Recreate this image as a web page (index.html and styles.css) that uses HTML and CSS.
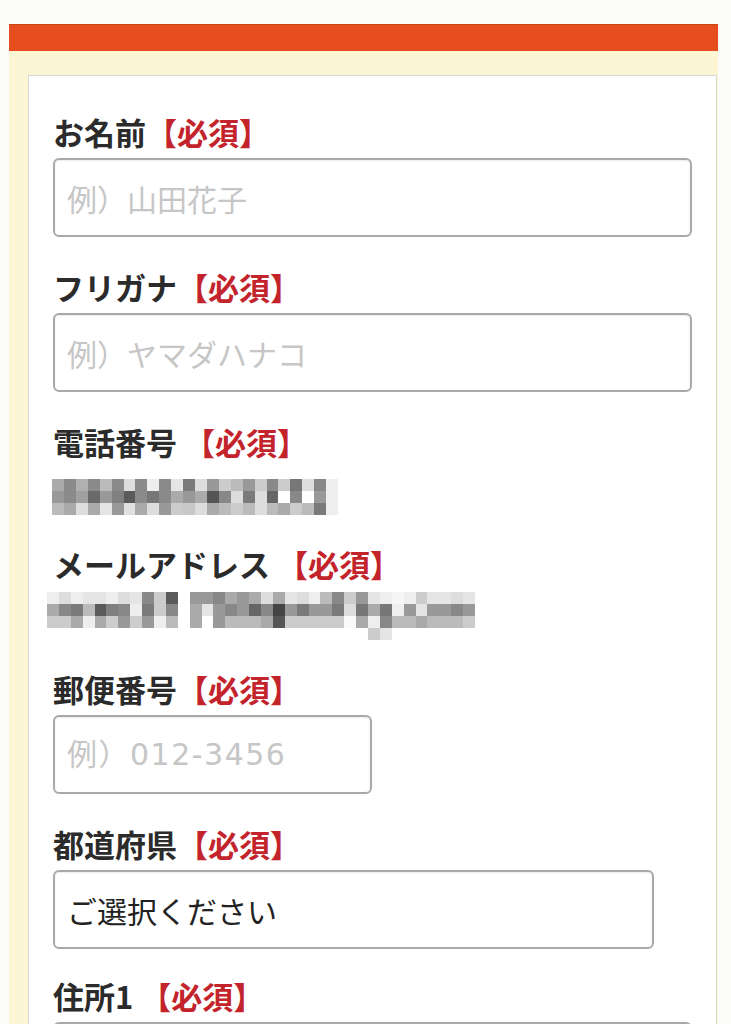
FILE: index.html
```html
<!DOCTYPE html>
<html lang="ja">
<head>
<meta charset="utf-8">
<title>お問い合わせフォーム</title>
<link rel="stylesheet" href="styles.css">
</head>
<body>
<div class="page">
  <div class="bar"></div>
  <div class="panel">
    <form class="card">
      <div class="field">
        <label class="label">お名前<span class="req">【必須】</span></label>
        <input class="input" type="text" placeholder="例）山田花子">
      </div>
      <div class="field">
        <label class="label">フリガナ<span class="req">【必須】</span></label>
        <input class="input" type="text" placeholder="例）ヤマダハナコ">
      </div>
      <div class="field field-phone">
        <label class="label">電話番号 <span class="req">【必須】</span></label>
        <svg class="mosaic mosaic-phone" viewBox="0 0 24 3" preserveAspectRatio="none" shape-rendering="crispEdges" aria-label="電話番号（モザイク）">
          <g>
            <rect x="0" y="0" width="1.05" height="1.05" fill="#aaa"/><rect x="0" y="1" width="1.05" height="1.05" fill="#999"/><rect x="0" y="2" width="1.05" height="1" fill="#bbb"/>
            <rect x="1" y="0" width="1.05" height="1.05" fill="#8a8a8a"/><rect x="1" y="1" width="1.05" height="1.05" fill="#8a8a8a"/><rect x="1" y="2" width="1.05" height="1" fill="#aaa"/>
            <rect x="2" y="0" width="1.05" height="1.05" fill="#b0b0b0"/><rect x="2" y="1" width="1.05" height="1.05" fill="#a0a0a0"/><rect x="2" y="2" width="1.05" height="1" fill="#ddd"/>
            <rect x="3" y="0" width="1.05" height="1.05" fill="#8a8a8a"/><rect x="3" y="1" width="1.05" height="1.05" fill="#6a6a6a"/><rect x="3" y="2" width="1.05" height="1" fill="#aaa"/>
            <rect x="4" y="0" width="1.05" height="1.05" fill="#bbb"/><rect x="4" y="1" width="1.05" height="1.05" fill="#999"/><rect x="4" y="2" width="1.05" height="1" fill="#e5e5e5"/>
            <rect x="5" y="0" width="1.05" height="1.05" fill="#8a8a8a"/><rect x="5" y="1" width="1.05" height="1.05" fill="#808080"/><rect x="5" y="2" width="1.05" height="1" fill="#999"/>
            <rect x="6" y="0" width="1.05" height="1.05" fill="#ddd"/><rect x="6" y="1" width="1.05" height="1.05" fill="#5a5a5a"/><rect x="6" y="2" width="1.05" height="1" fill="#e0e0e0"/>
            <rect x="7" y="0" width="1.05" height="1.05" fill="#8a8a8a"/><rect x="7" y="1" width="1.05" height="1.05" fill="#8a8a8a"/><rect x="7" y="2" width="1.05" height="1" fill="#aaa"/>
            <rect x="8" y="0" width="1.05" height="1.05" fill="#eee"/><rect x="8" y="1" width="1.05" height="1.05" fill="#777"/><rect x="8" y="2" width="1.05" height="1" fill="#ddd"/>
            <rect x="9" y="0" width="1.05" height="1.05" fill="#8a8a8a"/><rect x="9" y="1" width="1.05" height="1.05" fill="#8a8a8a"/><rect x="9" y="2" width="1.05" height="1" fill="#999"/>
            <rect x="10" y="0" width="1.05" height="1.05" fill="#e5e5e5"/><rect x="10" y="1" width="1.05" height="1.05" fill="#aaa"/><rect x="10" y="2" width="1.05" height="1" fill="#ccc"/>
            <rect x="11" y="0" width="1.05" height="1.05" fill="#7a7a7a"/><rect x="11" y="1" width="1.05" height="1.05" fill="#999"/><rect x="11" y="2" width="1.05" height="1" fill="#c8c8c8"/>
            <rect x="12" y="0" width="1.05" height="1.05" fill="#ddd"/><rect x="12" y="1" width="1.05" height="1.05" fill="#aaa"/><rect x="12" y="2" width="1.05" height="1" fill="#ddd"/>
            <rect x="13" y="0" width="1.05" height="1.05" fill="#999"/><rect x="13" y="1" width="1.05" height="1.05" fill="#555"/><rect x="13" y="2" width="1.05" height="1" fill="#aaa"/>
            <rect x="14" y="0" width="1.05" height="1.05" fill="#ccc"/><rect x="14" y="1" width="1.05" height="1.05" fill="#888"/><rect x="14" y="2" width="1.05" height="1" fill="#bbb"/>
            <rect x="15" y="0" width="1.05" height="1.05" fill="#bbb"/><rect x="15" y="1" width="1.05" height="1.05" fill="#ddd"/><rect x="15" y="2" width="1.05" height="1" fill="#ccc"/>
            <rect x="16" y="0" width="1.05" height="1.05" fill="#999"/><rect x="16" y="1" width="1.05" height="1.05" fill="#7a7a7a"/><rect x="16" y="2" width="1.05" height="1" fill="#bbb"/>
            <rect x="17" y="0" width="1.05" height="1.05" fill="#ccc"/><rect x="17" y="1" width="1.05" height="1.05" fill="#ddd"/><rect x="17" y="2" width="1.05" height="1" fill="#ddd"/>
            <rect x="18" y="0" width="1.05" height="1.05" fill="#8a8a8a"/><rect x="18" y="1" width="1.05" height="1.05" fill="#666"/><rect x="18" y="2" width="1.05" height="1" fill="#bbb"/>
            <rect x="19" y="0" width="1.05" height="1.05" fill="#ccc"/><rect x="19" y="1" width="1.05" height="1.05" fill="#fff"/><rect x="19" y="2" width="1.05" height="1" fill="#aaa"/>
            <rect x="20" y="0" width="1.05" height="1.05" fill="#777"/><rect x="20" y="1" width="1.05" height="1.05" fill="#888"/><rect x="20" y="2" width="1.05" height="1" fill="#ccc"/>
            <rect x="21" y="0" width="1.05" height="1.05" fill="#ddd"/><rect x="21" y="1" width="1.05" height="1.05" fill="#fff"/><rect x="21" y="2" width="1.05" height="1" fill="#bbb"/>
            <rect x="22" y="0" width="1.05" height="1.05" fill="#888"/><rect x="22" y="1" width="1.05" height="1.05" fill="#999"/><rect x="22" y="2" width="1.05" height="1" fill="#7a7a7a"/>
            <rect x="23" y="0" width="1" height="3" fill="#eee"/>
          </g>
        </svg>
      </div>
      <div class="field field-mail">
        <label class="label">メールアドレス <span class="req">【必須】</span></label>
        <svg class="mosaic mosaic-mail" viewBox="0 0 36 4" preserveAspectRatio="none" shape-rendering="crispEdges" aria-label="メールアドレス（モザイク）">
          <g>
            <rect x="0" y="0" width="1.05" height="1.05" fill="#eee"/><rect x="0" y="1" width="1.05" height="1.05" fill="#aaa"/><rect x="0" y="2" width="1.05" height="1" fill="#ccc"/>
            <rect x="1" y="0" width="1.05" height="1.05" fill="#ddd"/><rect x="1" y="1" width="1.05" height="1.05" fill="#888"/><rect x="1" y="2" width="1.05" height="1" fill="#ccc"/>
            <rect x="2" y="0" width="1.05" height="1.05" fill="#eee"/><rect x="2" y="1" width="1.05" height="1.05" fill="#7a7a7a"/><rect x="2" y="2" width="1.05" height="1" fill="#aaa"/>
            <rect x="3" y="0" width="1.05" height="1.05" fill="#e5e5e5"/><rect x="3" y="1" width="1.05" height="1.05" fill="#bbb"/><rect x="3" y="2" width="1.05" height="1" fill="#eee"/>
            <rect x="4" y="0" width="1.05" height="1.05" fill="#e5e5e5"/><rect x="4" y="1" width="1.05" height="1.05" fill="#5a5a5a"/><rect x="4" y="2" width="1.05" height="1" fill="#aaa"/>
            <rect x="5" y="0" width="1.05" height="1.05" fill="#eee"/><rect x="5" y="1" width="1.05" height="1.05" fill="#808080"/><rect x="5" y="2" width="1.05" height="1" fill="#ccc"/>
            <rect x="6" y="0" width="1.05" height="1.05" fill="#ddd"/><rect x="6" y="1" width="1.05" height="1.05" fill="#888"/><rect x="6" y="2" width="1.05" height="1" fill="#999"/>
            <rect x="7" y="0" width="1.05" height="1.05" fill="#e5e5e5"/><rect x="7" y="1" width="1.05" height="1.05" fill="#eee"/><rect x="7" y="2" width="1.05" height="1" fill="#ccc"/>
            <rect x="8" y="0" width="1.05" height="1.05" fill="#888"/><rect x="8" y="1" width="1.05" height="1.05" fill="#7a7a7a"/><rect x="8" y="2" width="1.05" height="1" fill="#999"/>
            <rect x="9" y="0" width="1.05" height="1.05" fill="#ccc"/><rect x="9" y="1" width="1.05" height="1.05" fill="#ccc"/><rect x="9" y="2" width="1.05" height="1" fill="#eee"/>
            <rect x="10" y="0" width="1" height="1.05" fill="#5a5a5a"/><rect x="10" y="1" width="1" height="1.05" fill="#888"/><rect x="10" y="2" width="1" height="1" fill="#bbb"/>
            <rect x="12" y="0" width="1.05" height="1.05" fill="#999"/><rect x="12" y="1" width="1.05" height="1.05" fill="#aaa"/><rect x="12" y="2" width="1.05" height="1" fill="#aaa"/>
            <rect x="13" y="0" width="1.05" height="1.05" fill="#999"/><rect x="13" y="1" width="1.05" height="1.05" fill="#e5e5e5"/><rect x="13" y="2" width="1.05" height="1" fill="#fff"/>
            <rect x="14" y="0" width="1.05" height="1.05" fill="#888"/><rect x="14" y="1" width="1.05" height="1.05" fill="#999"/><rect x="14" y="2" width="1.05" height="1" fill="#999"/>
            <rect x="15" y="0" width="1.05" height="1.05" fill="#aaa"/><rect x="15" y="1" width="1.05" height="1.05" fill="#888"/><rect x="15" y="2" width="1.05" height="1" fill="#bbb"/>
            <rect x="16" y="0" width="1.05" height="1.05" fill="#999"/><rect x="16" y="1" width="1.05" height="1.05" fill="#999"/><rect x="16" y="2" width="1.05" height="1" fill="#bbb"/>
            <rect x="17" y="0" width="1.05" height="1.05" fill="#aaa"/><rect x="17" y="1" width="1.05" height="1.05" fill="#666"/><rect x="17" y="2" width="1.05" height="1" fill="#bbb"/>
            <rect x="18" y="0" width="1.05" height="1.05" fill="#ddd"/><rect x="18" y="1" width="1.05" height="1.05" fill="#888"/><rect x="18" y="2" width="1.05" height="1" fill="#aaa"/>
            <rect x="19" y="0" width="1.05" height="1.05" fill="#aaa"/><rect x="19" y="1" width="1.05" height="1.05" fill="#444"/><rect x="19" y="2" width="1.05" height="1" fill="#555"/>
            <rect x="20" y="0" width="1.05" height="1.05" fill="#e5e5e5"/><rect x="20" y="1" width="1.05" height="1.05" fill="#999"/><rect x="20" y="2" width="1.05" height="1" fill="#ccc"/>
            <rect x="21" y="0" width="1.05" height="1.05" fill="#ddd"/><rect x="21" y="1" width="1.05" height="1.05" fill="#7a7a7a"/><rect x="21" y="2" width="1.05" height="1" fill="#ccc"/>
            <rect x="22" y="0" width="1.05" height="1.05" fill="#eee"/><rect x="22" y="1" width="1.05" height="1.05" fill="#999"/><rect x="22" y="2" width="1.05" height="1" fill="#ccc"/>
            <rect x="23" y="0" width="1.05" height="1.05" fill="#bbb"/><rect x="23" y="1" width="1.05" height="1.05" fill="#999"/><rect x="23" y="2" width="1.05" height="1" fill="#ccc"/>
            <rect x="24" y="0" width="1.05" height="1.05" fill="#888"/><rect x="24" y="1" width="1.05" height="1.05" fill="#7a7a7a"/><rect x="24" y="2" width="1.05" height="1" fill="#ccc"/>
            <rect x="25" y="0" width="1.05" height="1.05" fill="#ccc"/><rect x="25" y="1" width="1.05" height="1.05" fill="#ddd"/><rect x="25" y="2" width="1.05" height="1" fill="#fafafa"/>
            <rect x="26" y="0" width="1.05" height="1.05" fill="#999"/><rect x="26" y="1" width="1.05" height="1.05" fill="#777"/><rect x="26" y="2" width="1.05" height="1" fill="#aaa"/>
            <rect x="27" y="0" width="1.05" height="1.05" fill="#e5e5e5"/><rect x="27" y="1" width="1.05" height="1.05" fill="#aaa"/><rect x="27" y="2" width="1.05" height="1.05" fill="#eee"/><rect x="27" y="3" width="1.05" height="1" fill="#ccc"/>
            <rect x="28" y="0" width="1.05" height="1.05" fill="#eee"/><rect x="28" y="1" width="1.05" height="1.05" fill="#777"/><rect x="28" y="2" width="1.05" height="1.05" fill="#888"/><rect x="28" y="3" width="1" height="1" fill="#e5e5e5"/>
            <rect x="29" y="0" width="1.05" height="1.05" fill="#f5f5f5"/><rect x="29" y="1" width="1.05" height="1.05" fill="#eee"/><rect x="29" y="2" width="1.05" height="1" fill="#bbb"/>
            <rect x="30" y="0" width="1.05" height="1.05" fill="#eee"/><rect x="30" y="1" width="1.05" height="1.05" fill="#999"/><rect x="30" y="2" width="1.05" height="1" fill="#bbb"/>
            <rect x="31" y="0" width="1.05" height="1.05" fill="#ccc"/><rect x="31" y="1" width="1.05" height="1.05" fill="#e5e5e5"/><rect x="31" y="2" width="1.05" height="1" fill="#aaa"/>
            <rect x="32" y="0" width="1.05" height="1.05" fill="#e5e5e5"/><rect x="32" y="1" width="1.05" height="1.05" fill="#999"/><rect x="32" y="2" width="1.05" height="1" fill="#bbb"/>
            <rect x="33" y="0" width="1.05" height="1.05" fill="#e5e5e5"/><rect x="33" y="1" width="1.05" height="1.05" fill="#999"/><rect x="33" y="2" width="1.05" height="1" fill="#bbb"/>
            <rect x="34" y="0" width="1.05" height="1.05" fill="#ddd"/><rect x="34" y="1" width="1.05" height="1.05" fill="#888"/><rect x="34" y="2" width="1.05" height="1" fill="#bbb"/>
            <rect x="35" y="0" width="1" height="1.05" fill="#e5e5e5"/><rect x="35" y="1" width="1" height="1.05" fill="#999"/><rect x="35" y="2" width="1" height="1" fill="#ccc"/>
          </g>
        </svg>
      </div>
      <div class="field">
        <label class="label">郵便番号<span class="req">【必須】</span></label>
        <input class="input input-zip" type="text" placeholder="例）012-3456">
      </div>
      <div class="field field-pref">
        <label class="label">都道府県<span class="req">【必須】</span></label>
        <select class="input input-select">
          <option>ご選択ください</option>
          <option>北海道</option>
          <option>青森県</option>
          <option>東京都</option>
        </select>
      </div>
      <div class="field">
        <label class="label">住所1 <span class="req">【必須】</span></label>
        <input class="input" type="text">
      </div>
    </form>
  </div>
</div>
</body>
</html>
```

FILE: styles.css
```css
* {
  box-sizing: border-box;
}

html, body {
  margin: 0;
  padding: 0;
}

body {
  background: #fbfbf9;
  font-family: "Noto Sans CJK JP", "Noto Sans", sans-serif;
  color: #2a2a2a;
}

.page {
  margin: 24px 0 0 9px;
  width: 709px;
}

.bar {
  height: 27px;
  background: #e64e1f;
  box-shadow: inset 0 1px 0 rgba(120, 40, 10, 0.25);
}

.panel {
  background: #fcf6d4;
  padding: 24px 1px 0 19px;
}

.card {
  background: #fff;
  border: 1px solid #d6d6d2;
  border-bottom: none;
  padding: 39px 24px 60px 24px;
  display: flex;
  flex-direction: column;
}

.field {
  display: flex;
  flex-direction: column;
  margin-bottom: 33px;
}

.label {
  display: block;
  font-size: 31px;
  line-height: 34px;
  font-weight: 700;
  color: #2b2b2b;
  white-space: nowrap;
}

.req {
  color: #c3242b;
}

.input {
  display: block;
  width: 100%;
  height: 79px;
  margin-top: 9px;
  padding: 0 12px;
  border: 2px solid #a9a9a9;
  border-radius: 6px;
  background: #fff;
  box-shadow: inset 0 1px 2px rgba(0, 0, 0, 0.08);
  font-family: "Noto Sans CJK JP", "Noto Sans", sans-serif;
  font-size: 30px;
  color: #2a2a2a;
  outline: none;
}

.input::placeholder {
  color: #c6c6c6;
}

.input-zip {
  width: 319px;
  font-family: "DejaVu Sans", "Noto Sans CJK JP", sans-serif;
  letter-spacing: 1.5px;
}

.input-select {
  width: 601px;
  -webkit-appearance: none;
  appearance: none;
  color: #222;
}

.field-pref {
  margin-bottom: 30px;
}

.mosaic {
  display: block;
}

.mosaic-phone {
  width: 286px;
  height: 36px;
  margin-top: 20px;
  margin-left: -1px;
}

.field-phone {
  margin-bottom: 32px;
}

.mosaic-mail {
  width: 428px;
  height: 48px;
  margin-top: 11px;
  margin-left: -6px;
}

.field-mail {
  margin-bottom: 32px;
}
```
